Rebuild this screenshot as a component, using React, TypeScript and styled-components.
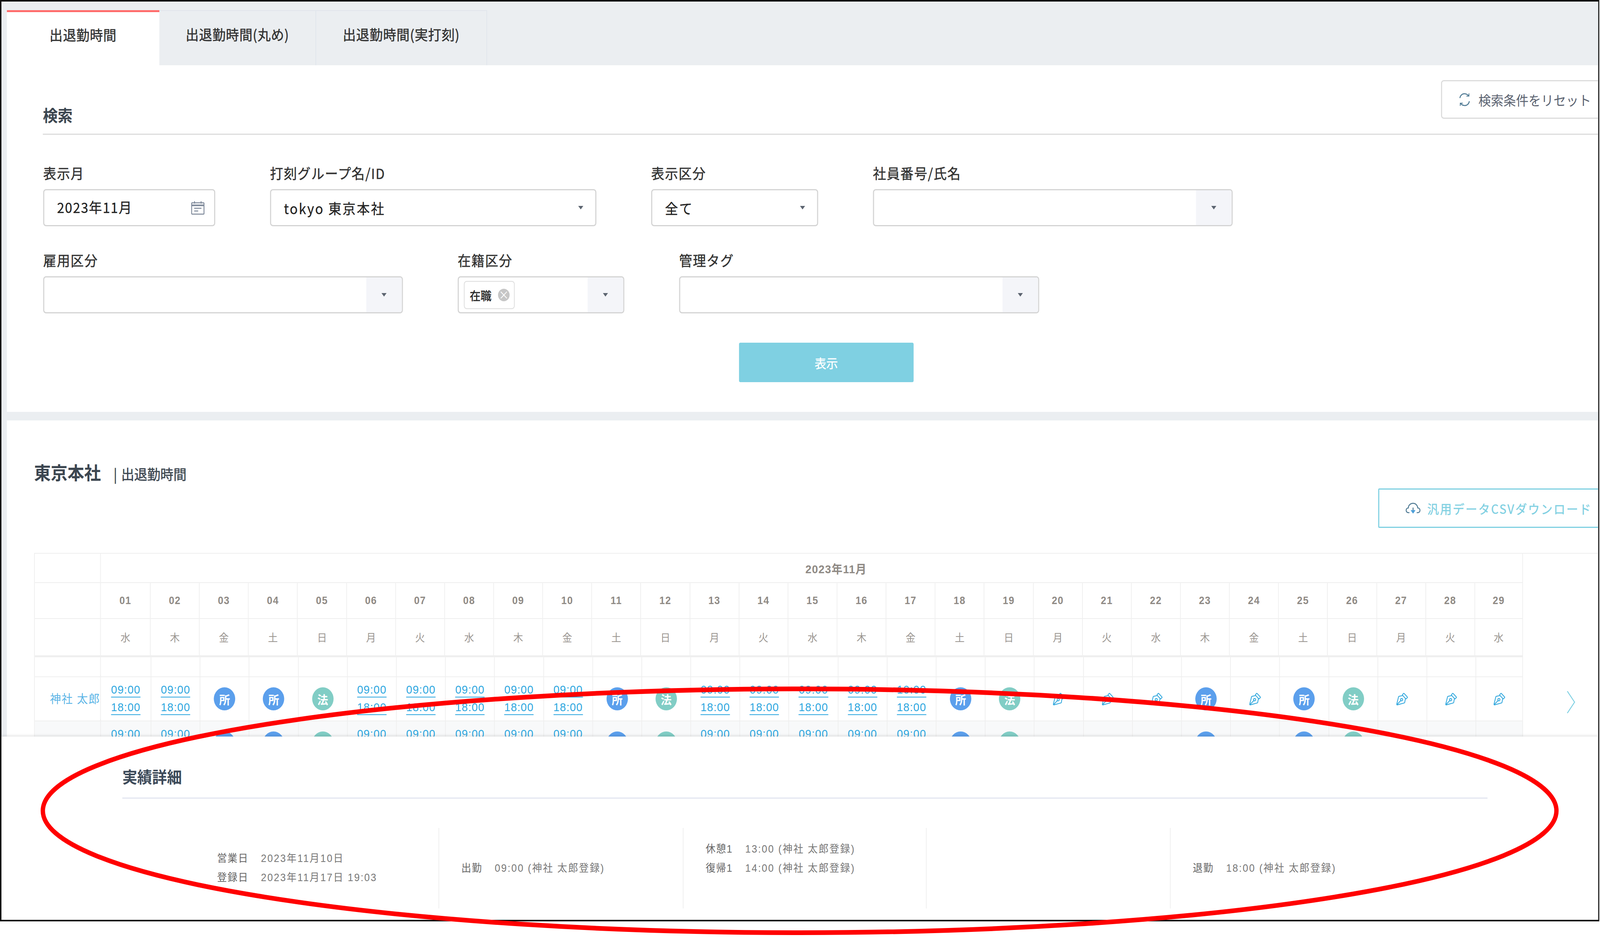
import styled, { createGlobalStyle } from 'styled-components';
import { PenTool } from 'lucide-react';

type Day =
  | { kind: 'time'; in: string; out: string }
  | { kind: 'badge'; label: string }
  | { kind: 'pen' };

const WEEK = ['水', '木', '金', '土', '日', '月', '火'];
const SANS = '"Liberation Sans", "Noto Sans CJK JP", sans-serif';
const PAGE_WIDTH = 4408;

const work = (start = '09:00'): Day => ({ kind: 'time', in: start, out: '18:00' });
const sho: Day = { kind: 'badge', label: '所' };
const ho: Day = { kind: 'badge', label: '法' };
const pen: Day = { kind: 'pen' };

const firstRow: Day[] = [
  work(), work(), sho, sho, ho, work(), work(), work(), work(), work(),
  sho, ho, work(), work(), work(), work(), work('10:00'), sho, ho, pen,
  pen, pen, sho, pen, sho, ho, pen, pen, pen,
];

const secondRow: Day[] = firstRow.map((d, i) => (i === 16 ? work() : d));

const days = firstRow.map((_, i) => ({
  num: String(i + 1).padStart(2, '0'),
  week: WEEK[i % 7],
}));

function CalendarIcon() {
  return (
    <svg width="38" height="36" viewBox="0 0 38 36" fill="none" stroke="#7c8798" strokeWidth="2.4">
      <rect x="2" y="5" width="34" height="29" rx="1.5" />
      <path d="M2 11.5h34" strokeWidth="4" />
      <path d="M10 1v6M28 1v6" />
      <path d="M9 19h20M9 26h11" />
    </svg>
  );
}

function RefreshIcon() {
  return (
    <svg width="32" height="38" viewBox="0 0 32 38" fill="none" stroke="#4f7a94" strokeWidth="2.6">
      <path d="M3 15C4 8 10 3 17 4c4 .5 7 2 10 5" />
      <path d="M28 3v7h-7" strokeWidth="2" />
      <path d="M29 23c-1 7-7 12-14 11-4-.5-7-2-10-5" />
      <path d="M4 35v-7h7" strokeWidth="2" />
    </svg>
  );
}

function CloudIcon() {
  return (
    <svg width="42" height="32" viewBox="0 0 42 32" fill="none" stroke="#4f7a94" strokeWidth="2.6">
      <path d="M11 27H8C4 27 2 24 2 21c0-4 3-6 6-6 0-7 6-12 13-12s12 5 13 12c3 0 6 2 6 6 0 3-2 6-6 6h-3" />
      <path d="M21 14v7" />
      <path d="M15 21h12l-6 8z" fill="#4d9fd8" stroke="#4d9fd8" strokeWidth="1" />
    </svg>
  );
}

function Select({ children, addon }: { children?: React.ReactNode; addon?: boolean }) {
  return (
    <Control>
      <ControlValue>{children}</ControlValue>
      {addon ? (
        <Addon>
          <Caret />
        </Addon>
      ) : (
        <PlainCaret>
          <Caret />
        </PlainCaret>
      )}
    </Control>
  );
}

function DayCell({ day }: { day: Day }) {
  if (day.kind === 'time') {
    return (
      <>
        <TimeLink>{day.in}</TimeLink>
        <TimeLink>{day.out}</TimeLink>
      </>
    );
  }
  if (day.kind === 'badge') {
    return <Badge $green={day.label === '法'}>{day.label}</Badge>;
  }
  return (
    <PenMark>
      <PenTool size={36} strokeWidth={1.5} color="#35a9de" />
    </PenMark>
  );
}

export default function App() {
  // the browser window can be narrower than the design width
  const fit = Math.min(1, window.innerWidth / PAGE_WIDTH);

  return (
    <Page style={{ transform: `scaleX(${fit})` }}>
      <GlobalStyle />
      <Frame>
        <Workspace>
          <TabBar>
            <Tab $active $width={420}>出退勤時間</Tab>
            <Tab $width={432}>出退勤時間(丸め)</Tab>
            <Tab $width={471}>出退勤時間(実打刻)</Tab>
          </TabBar>

          <SearchSection>
            <SearchHeader>
              <SearchTitle>検索</SearchTitle>
              <ResetButton>
                <RefreshIcon />
                検索条件をリセット
              </ResetButton>
            </SearchHeader>
            <FormRow $top={77}>
              <Field $width={474}>
                <FieldLabel>表示月</FieldLabel>
                <Control>
                  <DateValue>2023年11月</DateValue>
                  <CalendarSlot>
                    <CalendarIcon />
                  </CalendarSlot>
                </Control>
              </Field>
              <Field $width={899}>
                <FieldLabel>打刻グループ名/ID</FieldLabel>
                <Select>tokyo 東京本社</Select>
              </Field>
              <Field $width={460}>
                <FieldLabel>表示区分</FieldLabel>
                <Select>全て</Select>
              </Field>
              <Field $width={991}>
                <FieldLabel>社員番号/氏名</FieldLabel>
                <Select addon />
              </Field>
            </FormRow>
            <FormRow $top={66}>
              <Field $width={991}>
                <FieldLabel>雇用区分</FieldLabel>
                <Select addon />
              </Field>
              <Field $width={459}>
                <FieldLabel>在籍区分</FieldLabel>
                <Select addon>
                  <Tag>
                    在職
                    <TagClose>×</TagClose>
                  </Tag>
                </Select>
              </Field>
              <Field $width={992}>
                <FieldLabel>管理タグ</FieldLabel>
                <Select addon />
              </Field>
            </FormRow>
            <SubmitRow>
              <SubmitButton>表示</SubmitButton>
            </SubmitRow>
          </SearchSection>

          <ResultSection>
            <ResultHeading>
              <ResultTitle>東京本社</ResultTitle>
              <ResultSub>| 出退勤時間</ResultSub>
            </ResultHeading>
            <ResultToolbar>
              <CsvButton>
                <CloudIcon />
                汎用データCSVダウンロード
              </CsvButton>
            </ResultToolbar>
            <TableArea>
              <Table>
                <MonthRow>
                  <MonthSide />
                  <MonthCell>2023年11月</MonthCell>
                </MonthRow>
                <HeadRow $height={92}>
                  <SideCell />
                  {days.map((d) => (
                    <DateCell key={d.num}>{d.num}</DateCell>
                  ))}
                </HeadRow>
                <HeadRow $height={98} $thick>
                  <SideCell />
                  {days.map((d) => (
                    <WeekCell key={d.num}>{d.week}</WeekCell>
                  ))}
                </HeadRow>
                <BodyRow $height={51}>
                  <SideCell />
                  {days.map((d) => (
                    <DayBox key={d.num} />
                  ))}
                </BodyRow>
                <BodyRow $height={113}>
                  <NameCell>神社 太郎</NameCell>
                  {firstRow.map((d, i) => (
                    <DayBox key={i}>
                      <DayCell day={d} />
                    </DayBox>
                  ))}
                </BodyRow>
                <BodyRow $height={113} $striped>
                  <NameCell>神社 太郎</NameCell>
                  {secondRow.map((d, i) => (
                    <DayBox key={i}>
                      <DayCell day={d} />
                    </DayBox>
                  ))}
                </BodyRow>
              </Table>
              <PagerSide>
                <svg width="24" height="60" viewBox="0 0 24 60" fill="none" stroke="#7fd0e2" strokeWidth="2.4">
                  <path d="M2 2l20 28L2 58" />
                </svg>
              </PagerSide>
            </TableArea>
          </ResultSection>
        </Workspace>

        <DetailPanel>
          <DetailHeading>実績詳細</DetailHeading>
          <DetailGrid>
            <DetailCol $first>
              <DetailLine>
                <DetailLabel>営業日</DetailLabel>2023年11月10日
              </DetailLine>
              <DetailLine>
                <DetailLabel>登録日</DetailLabel>2023年11月17日 19:03
              </DetailLine>
            </DetailCol>
            <DetailCol>
              <DetailLine>
                <DetailLabel>出勤</DetailLabel>09:00 (神社 太郎登録)
              </DetailLine>
            </DetailCol>
            <DetailCol $raised>
              <DetailLine>
                <DetailLabel>休憩1</DetailLabel>13:00 (神社 太郎登録)
              </DetailLine>
              <DetailLine>
                <DetailLabel>復帰1</DetailLabel>14:00 (神社 太郎登録)
              </DetailLine>
            </DetailCol>
            <DetailCol />
            <DetailCol $last>
              <DetailLine>
                <DetailLabel>退勤</DetailLabel>18:00 (神社 太郎登録)
              </DetailLine>
            </DetailCol>
          </DetailGrid>
        </DetailPanel>
      </Frame>

      <Annotation viewBox="0 0 4408 2398" fill="none">
        <ellipse cx="2203" cy="2075" rx="2085" ry="312" stroke="#ff0000" strokeWidth="12" />
      </Annotation>
    </Page>
  );
}

const GlobalStyle = createGlobalStyle`
  html, body {
    margin: 0;
    padding: 0;
    background: #fff;
    overflow: hidden;
  }
  * {
    box-sizing: border-box;
  }
`;

const Page = styled.div`
  position: relative;
  width: 4408px;
  height: 2398px;
  transform-origin: 0 0;
  background: #fff;
  overflow: hidden;
  font-family: "Noto Sans CJK JP", "Liberation Sans", sans-serif;
  color: #333;
`;

const Frame = styled.div`
  width: 4406px;
  height: 2358px;
  border-style: solid;
  border-color: #111;
  border-width: 4px 3px 4px 4px;
  display: flex;
  flex-direction: column;
  overflow: hidden;
  background: #fff;
`;

const Workspace = styled.div`
  height: 1881px;
  flex-shrink: 0;
  overflow: hidden;
  background: #ebeef1;
`;

const TabBar = styled.div`
  height: 163px;
  padding: 22px 0 0 15px;
  display: flex;
`;

const Tab = styled.div<{ $active?: boolean; $width: number }>`
  width: ${(p) => p.$width}px;
  display: flex;
  align-items: center;
  justify-content: center;
  padding-bottom: 22px;
  font-size: 36px;
  letter-spacing: 1px;
  -webkit-text-stroke: 0.6px #333;
  background: ${(p) => (p.$active ? '#fff' : 'transparent')};
  border-top: ${(p) => (p.$active ? '5px solid #ff6b6b' : '2px solid #e1e5ec')};
  border-right: ${(p) => (p.$active ? 'none' : '2px solid #e1e5ec')};
`;

const SearchSection = styled.section`
  margin-left: 15px;
  height: 887px;
  background: #fff;
  overflow: hidden;
`;

const SearchHeader = styled.div`
  margin-left: 99px;
  height: 178px;
  padding-top: 38px;
  border-bottom: 3px solid #dcdcdc;
  display: flex;
  justify-content: space-between;
  align-items: flex-start;
`;

const SearchTitle = styled.h2`
  margin: 58px 0 0;
  font-size: 41px;
  line-height: 60px;
  font-weight: 700;
  color: #3c4650;
`;

const ResetButton = styled.div`
  width: 480px;
  margin-right: -47px;
  height: 99px;
  flex-shrink: 0;
  display: flex;
  align-items: center;
  gap: 22px;
  padding-left: 46px;
  border: 3px solid #dcdcdc;
  border-radius: 8px;
  font-size: 34.5px;
  color: #5a6270;
`;

const FormRow = styled.div<{ $top: number }>`
  display: flex;
  gap: 151px;
  margin: ${(p) => p.$top}px 0 0 100px;
`;

const Field = styled.div<{ $width: number }>`
  width: ${(p) => p.$width}px;
  flex-shrink: 0;
`;

const FieldLabel = styled.div`
  height: 40px;
  line-height: 40px;
  margin-bottom: 22px;
  font-size: 36px;
  letter-spacing: 1.8px;
  -webkit-text-stroke: 0.6px #333;
  white-space: nowrap;
`;

const Control = styled.div`
  height: 95px;
  display: flex;
  align-items: stretch;
  border: 3px solid #d4d4d4;
  border-radius: 8px;
  background: #fff;
  overflow: hidden;
`;

const ControlValue = styled.div`
  flex: 1;
  min-width: 0;
  display: flex;
  align-items: center;
  padding-left: 35px;
  font-size: 36px;
  letter-spacing: 3.2px;
  -webkit-text-stroke: 0.4px #222;
  color: #222;
`;

const DateValue = styled(ControlValue)`
  padding-bottom: 6px;
  letter-spacing: 2px;
`;

const CalendarSlot = styled.div`
  display: flex;
  align-items: center;
  padding-right: 26px;
`;

const Addon = styled.div`
  width: 98px;
  display: flex;
  align-items: center;
  justify-content: center;
  background: #f4f5f9;
`;

const PlainCaret = styled.div`
  width: 80px;
  display: flex;
  align-items: center;
  justify-content: center;
`;

const Caret = styled.span`
  width: 0;
  height: 0;
  border-left: 7px solid transparent;
  border-right: 7px solid transparent;
  border-top: 9px solid #5c6470;
`;

const Tag = styled.div`
  height: 72px;
  margin-left: -21px;
  width: 140px;
  display: flex;
  align-items: center;
  justify-content: space-between;
  padding: 0 12px 0 14px;
  border: 2px solid #ddd;
  border-radius: 8px;
  font-size: 30px;
  letter-spacing: 0;
  -webkit-text-stroke: 0.6px #222;
`;

const TagClose = styled.span`
  width: 32px;
  height: 32px;
  border-radius: 50%;
  background: #c6c6c6;
  color: #fff;
  font-size: 28px;
  line-height: 30px;
  text-align: center;
  -webkit-text-stroke: 0;
`;

const SubmitRow = styled.div`
  display: flex;
  margin: 75px 0 0 2017px;
`;

const SubmitButton = styled.div`
  width: 481px;
  height: 101px;
  display: flex;
  align-items: center;
  justify-content: center;
  background: #7fd0e2;
  border-radius: 4px;
  color: #fff;
  font-size: 32px;
  -webkit-text-stroke: 0.5px #fff;
`;

const ResultSection = styled.section`
  margin: 22px 0 0 15px;
  height: 809px;
  padding: 101px 0 0 75px;
  background: #fff;
`;

const ResultHeading = styled.div`
  height: 60px;
  display: flex;
  align-items: center;
  gap: 35px;
`;

const ResultTitle = styled.h2`
  margin: 0;
  font-size: 46px;
  font-weight: 700;
  color: #3c4650;
`;

const ResultSub = styled.span`
  margin-top: 10px;
  font-size: 36px;
  color: #3c4650;
  -webkit-text-stroke: 0.6px #3c4650;
  word-spacing: 3px;
`;

const ResultToolbar = styled.div`
  margin-top: 13px;
  height: 101px;
  display: flex;
  justify-content: flex-end;
`;

const CsvButton = styled.div`
  width: 654px;
  margin-right: -48px;
  flex-shrink: 0;
  display: flex;
  align-items: center;
  gap: 18px;
  padding-left: 72px;
  border: 3px solid #7fd0e2;
  border-radius: 3px;
  font-size: 32px;
  letter-spacing: 3.2px;
  -webkit-text-stroke: 0.5px #7fd0e2;
  color: #7fd0e2;
  white-space: nowrap;
`;

const TableArea = styled.div`
  margin-top: 64px;
  display: flex;
  border-top: 2px solid #efefef;
`;

const Table = styled.div`
  width: 4102px;
  flex-shrink: 0;
  border-left: 2px solid #efefef;
  font-family: ${SANS};
`;

const MonthRow = styled.div`
  height: 75px;
  display: flex;
  border-bottom: 2px solid #efefef;
  border-right: 2px solid #efefef;
`;

const MonthSide = styled.div`
  width: 182px;
  border-right: 2px solid #efefef;
`;

const MonthCell = styled.div`
  flex: 1;
  padding-left: 135px;
  display: flex;
  align-items: center;
  justify-content: center;
  font-size: 30px;
  font-weight: 700;
  letter-spacing: 1.4px;
  color: #8f8a85;
`;

const HeadRow = styled.div<{ $height: number; $thick?: boolean }>`
  height: ${(p) => p.$height}px;
  display: grid;
  grid-template-columns: 182px 137px repeat(27, 135.15px) 1fr;
  border-bottom: ${(p) => (p.$thick ? '5px' : '2px')} solid #efefef;
`;

const BodyRow = styled.div<{ $height: number; $striped?: boolean }>`
  height: ${(p) => p.$height}px;
  display: grid;
  grid-template-columns: 182px 139px repeat(27, 135.2px) 1fr;
  border-bottom: 2px solid #efefef;
  background: ${(p) => (p.$striped ? '#f8f9fa' : 'transparent')};
`;

const SideCell = styled.div`
  border-right: 2px solid #efefef;
`;

const DateCell = styled.div`
  border-right: 2px solid #efefef;
  display: flex;
  align-items: center;
  justify-content: center;
  font-size: 27px;
  font-weight: 700;
  letter-spacing: 1.5px;
  color: #8f8a85;
`;

const WeekCell = styled(DateCell)`
  font-weight: 400;
  letter-spacing: 0;
  color: #9a9590;
`;

const NameCell = styled.div`
  border-right: 2px solid #efefef;
  display: flex;
  align-items: center;
  justify-content: flex-end;
  margin-top: -6px;
  font-size: 30px;
  letter-spacing: 2px;
  color: #5ab4e6;
  white-space: nowrap;
`;

const DayBox = styled.div`
  border-right: 2px solid #efefef;
  display: flex;
  flex-direction: column;
  align-items: center;
  justify-content: center;
  gap: 7px;
`;

const TimeLink = styled.a`
  font-size: 30px;
  line-height: 36px;
  letter-spacing: 1.2px;
  color: #2ea7e0;
  text-decoration: none;
  border-bottom: 2px solid #2ea7e0;
`;

const Badge = styled.div<{ $green?: boolean }>`
  width: 59px;
  height: 59px;
  border-radius: 50%;
  display: flex;
  align-items: center;
  justify-content: center;
  background: ${(p) => (p.$green ? '#81cdc5' : '#5b9fec')};
  color: #fff;
  font-size: 30px;
  font-weight: 700;
`;

const PenMark = styled.span`
  display: flex;
  transform: rotate(-90deg);
`;

const PagerSide = styled.div`
  padding: 350px 0 0 120px;
`;

const DetailPanel = styled.div`
  position: relative;
  flex: 1;
  padding: 75px 0 0 333px;
  background: #fff;
  box-shadow: 0 -3px 6px rgba(0, 0, 0, 0.1);
  font-family: ${SANS};
`;

const DetailHeading = styled.h3`
  width: 3761px;
  margin: 0;
  height: 84px;
  line-height: 60px;
  border-bottom: 3px solid #e3e6f0;
  font-size: 41px;
  font-weight: 700;
  color: #3d4a59;
`;

const DetailGrid = styled.div`
  margin-top: 75px;
  height: 206px;
  display: grid;
  grid-template-columns: 873px 673px 670px 672px 1fr;
`;

const DetailCol = styled.div<{ $first?: boolean; $last?: boolean; $raised?: boolean }>`
  display: flex;
  flex-direction: column;
  justify-content: center;
  padding: 0 0 ${(p) => (p.$raised ? '55px' : '6px')} ${(p) => (p.$first ? '261px' : '61px')};
  border-right: ${(p) => (p.$last ? 'none' : '2px solid #efefef')};
`;

const DetailLine = styled.div`
  height: 49px;
  display: flex;
  align-items: center;
  gap: 34px;
  font-size: 27px;
  letter-spacing: 2.7px;
  color: #777;
  white-space: pre;
`;

const DetailLabel = styled.span`
  color: #666;
  letter-spacing: 2px;
`;

const Annotation = styled.svg`
  position: absolute;
  inset: 0;
  width: 4408px;
  height: 2398px;
  pointer-events: none;
`;
